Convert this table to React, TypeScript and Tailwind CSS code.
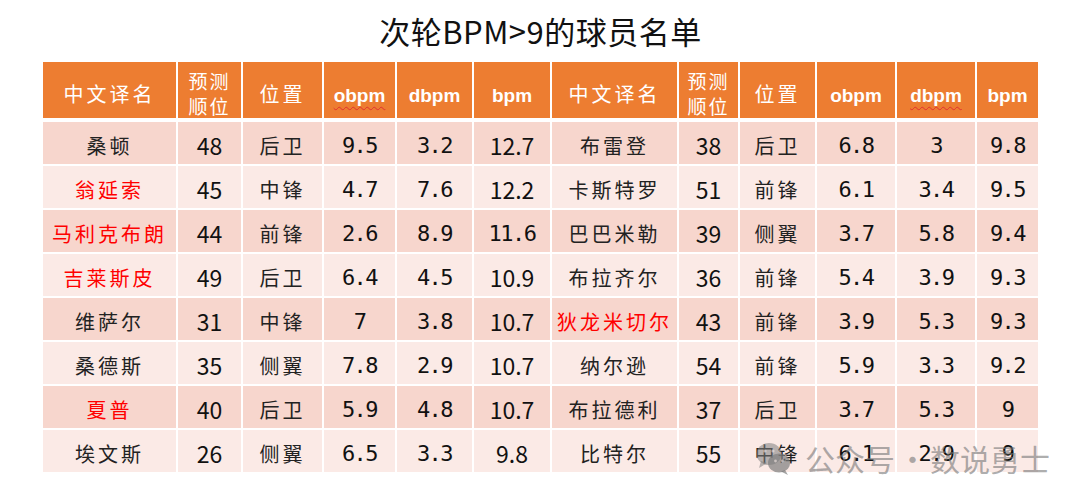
type Cell = { v: string; mono?: boolean };

type Player = {
  name: string;
  red?: boolean;
  rank: string;
  pos: string;
  obpm: Cell;
  dbpm: Cell;
  bpm: Cell;
};

const m = (v: string): Cell => ({ v, mono: true });
const p = (v: string): Cell => ({ v });

const left: Player[] = [
  { name: "桑顿", rank: "48", pos: "后卫", obpm: m("9.5"), dbpm: m("3.2"), bpm: p("12.7") },
  { name: "翁延索", red: true, rank: "45", pos: "中锋", obpm: m("4.7"), dbpm: m("7.6"), bpm: p("12.2") },
  { name: "马利克布朗", red: true, rank: "44", pos: "前锋", obpm: m("2.6"), dbpm: m("8.9"), bpm: m("11.6") },
  { name: "吉莱斯皮", red: true, rank: "49", pos: "后卫", obpm: m("6.4"), dbpm: m("4.5"), bpm: p("10.9") },
  { name: "维萨尔", rank: "31", pos: "中锋", obpm: m("7"), dbpm: m("3.8"), bpm: p("10.7") },
  { name: "桑德斯", rank: "35", pos: "侧翼", obpm: m("7.8"), dbpm: m("2.9"), bpm: p("10.7") },
  { name: "夏普", red: true, rank: "40", pos: "后卫", obpm: m("5.9"), dbpm: m("4.8"), bpm: p("10.7") },
  { name: "埃文斯", rank: "26", pos: "侧翼", obpm: m("6.5"), dbpm: m("3.3"), bpm: p("9.8") },
];

const right: Player[] = [
  { name: "布雷登", rank: "38", pos: "后卫", obpm: m("6.8"), dbpm: m("3"), bpm: m("9.8") },
  { name: "卡斯特罗", rank: "51", pos: "前锋", obpm: m("6.1"), dbpm: m("3.4"), bpm: m("9.5") },
  { name: "巴巴米勒", rank: "39", pos: "侧翼", obpm: m("3.7"), dbpm: m("5.8"), bpm: m("9.4") },
  { name: "布拉齐尔", rank: "36", pos: "前锋", obpm: m("5.4"), dbpm: m("3.9"), bpm: m("9.3") },
  { name: "狄龙米切尔", red: true, rank: "43", pos: "前锋", obpm: m("3.9"), dbpm: m("5.3"), bpm: m("9.3") },
  { name: "纳尔逊", rank: "54", pos: "前锋", obpm: m("5.9"), dbpm: m("3.3"), bpm: m("9.2") },
  { name: "布拉德利", rank: "37", pos: "后卫", obpm: m("3.7"), dbpm: m("5.3"), bpm: m("9") },
  { name: "比特尔", rank: "55", pos: "中锋", obpm: m("6.1"), dbpm: m("2.9"), bpm: m("9") },
];

const cjk = "font-['Noto_Sans_CJK_SC',sans-serif]";
const mono = "font-['DejaVu_Sans_Mono','Liberation_Mono',monospace] text-[22px] tracking-[-1.5px]";
const sans = "font-['Noto_Sans_CJK_SC','Roboto',sans-serif] text-[23px]";
const cols =
  "grid grid-cols-[133px_63px_79px_71px_75px_76px_125px_59px_75px_78px_78px_61px] gap-x-[2px]";

const NumCell = ({ c, bg }: { c: Cell; bg: string }) => (
  <div className={`${bg} flex items-center justify-center pt-[4px] text-[#111] ${c.mono ? mono : sans}`}>
    {c.v}
  </div>
);

const HeadCell = ({ children, wavy }: { children: React.ReactNode; wavy?: boolean }) => (
  <div className="bg-[#ED7D31] flex items-center justify-center pt-[12px] text-white text-[19px] font-bold font-['Liberation_Sans',Arial,sans-serif]">
    <span className={wavy ? "underline decoration-wavy decoration-[#e03030] decoration-1 underline-offset-[4px]" : ""}>
      {children}
    </span>
  </div>
);

const HeadCn = ({ children }: { children: React.ReactNode }) => (
  <div className={`bg-[#ED7D31] flex items-center justify-center pt-[7px] text-white text-[20px] tracking-[3px] ${cjk}`}>
    {children}
  </div>
);

const HeadRank = () => (
  <div className={`bg-[#ED7D31] flex flex-col items-center justify-center pt-[6px] text-white text-[19px] leading-[25px] tracking-[2px] ${cjk}`}>
    <span>预测</span>
    <span>顺位</span>
  </div>
);

const PlayerCells = ({ pl, bg }: { pl: Player; bg: string }) => (
  <>
    <div className={`${bg} flex items-center justify-center pt-[5px] text-[20px] tracking-[3px] ${cjk} ${pl.red ? "text-[#FF0000]" : "text-[#222]"}`}>
      {pl.name}
    </div>
    <div className={`${bg} flex items-center justify-center pt-[4px] text-[#111] ${sans}`}>{pl.rank}</div>
    <div className={`${bg} flex items-center justify-center pt-[5px] text-[20px] tracking-[3px] text-[#222] ${cjk}`}>{pl.pos}</div>
    <NumCell c={pl.obpm} bg={bg} />
    <NumCell c={pl.dbpm} bg={bg} />
    <NumCell c={pl.bpm} bg={bg} />
  </>
);

const WeChatIcon = () => (
  <svg width="36" height="34" viewBox="0 0 36 34">
    <ellipse cx="13" cy="13" rx="12.5" ry="11" fill="#7d7d7d" fillOpacity="0.55" />
    <path d="M5 20 L3 27 L11 22 Z" fill="#7d7d7d" fillOpacity="0.55" />
    <ellipse cx="23" cy="22" rx="11" ry="9.5" fill="#7d7d7d" fillOpacity="0.7" />
    <path d="M29 29 L32 34 L25 30.5 Z" fill="#7d7d7d" fillOpacity="0.7" />
    <circle cx="9" cy="10" r="1.6" fill="#f3e6e2" fillOpacity="0.6" />
    <circle cx="17" cy="10" r="1.6" fill="#f3e6e2" fillOpacity="0.6" />
    <circle cx="19.5" cy="20" r="1.4" fill="#f3e6e2" fillOpacity="0.6" />
    <circle cx="26.5" cy="20" r="1.4" fill="#f3e6e2" fillOpacity="0.6" />
  </svg>
);

export default function App() {
  return (
    <div className="relative w-[1080px] h-[503px] bg-white overflow-hidden">
      <div className="pl-[43px] w-[1038px]">
        <h1 className={`pt-[11px] h-[62px] text-center text-[31px] leading-[40px] tracking-[0.5px] text-[#111] font-normal ${cjk}`}>
          次轮BPM&gt;9的球员名单
        </h1>
        <div className={`${cols} h-[56px]`}>
          <HeadCn>中文译名</HeadCn>
          <HeadRank />
          <HeadCn>位置</HeadCn>
          <HeadCell wavy>obpm</HeadCell>
          <HeadCell>dbpm</HeadCell>
          <HeadCell>bpm</HeadCell>
          <HeadCn>中文译名</HeadCn>
          <HeadRank />
          <HeadCn>位置</HeadCn>
          <HeadCell>obpm</HeadCell>
          <HeadCell wavy>dbpm</HeadCell>
          <HeadCell>bpm</HeadCell>
        </div>
        <div className={`${cols} mt-[4px] grid-rows-[repeat(8,42px)] gap-y-[2px]`}>
          {left.map((pl, i) => {
            const bg = i % 2 === 0 ? "bg-[#F7D6CD]" : "bg-[#FBEAE6]";
            return (
              <div key={pl.name} className="contents">
                <PlayerCells pl={pl} bg={bg} />
                <PlayerCells pl={right[i]} bg={bg} />
              </div>
            );
          })}
        </div>
      </div>

      <div className="absolute left-[756px] top-[440px] flex items-center text-[30px] leading-[36px] text-[#777]/60 font-['Noto_Sans_CJK_SC',sans-serif]">
        <WeChatIcon />
        <span className="ml-[13px]">公众号</span>
        <span className="w-[35px] text-center">·</span>
        <span>数说勇士</span>
      </div>
    </div>
  );
}
